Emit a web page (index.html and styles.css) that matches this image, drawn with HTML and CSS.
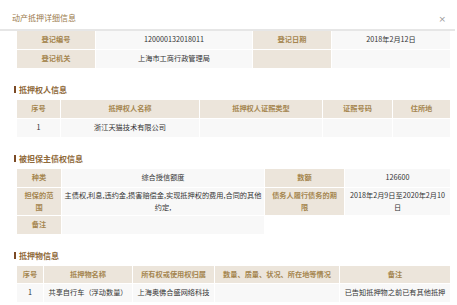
FILE: index.html
```html
<!DOCTYPE html>
<html lang="zh-CN">
<head>
<meta charset="utf-8">
<title>动产抵押详细信息</title>
<link rel="stylesheet" href="styles.css">
</head>
<body>
<div class="dialog">
  <div class="dialog-head">
    <span class="dialog-title">动产抵押详细信息</span>
    <span class="dialog-close">×</span>
  </div>
  <div class="dialog-body">
    <div class="grid t1">
      <div class="c lab">登记编号</div>
      <div class="c val">120000132018011</div>
      <div class="c lab">登记日期</div>
      <div class="c val">2018年2月12日</div>
      <div class="c lab">登记机关</div>
      <div class="c val">上海市工商行政管理局</div>
      <div class="c lab"></div>
      <div class="c val"></div>
    </div>

    <h3 class="sec"><span class="bar"></span>抵押权人信息</h3>
    <div class="grid t2">
      <div class="c lab">序号</div>
      <div class="c lab">抵押权人名称</div>
      <div class="c lab">抵押权人证照类型</div>
      <div class="c lab">证照号码</div>
      <div class="c lab">住所地</div>
      <div class="c val">1</div>
      <div class="c val">浙江天猫技术有限公司</div>
      <div class="c val"></div>
      <div class="c val"></div>
      <div class="c val"></div>
    </div>

    <h3 class="sec"><span class="bar"></span>被担保主债权信息</h3>
    <div class="grid t3">
      <div class="c lab">种类</div>
      <div class="c val">综合授信额度</div>
      <div class="c lab">数额</div>
      <div class="c val">126600</div>
      <div class="c lab tall scope-lab">担保的范围</div>
      <div class="c val tall scope">主债权,利息,违约金,损害赔偿金,实现抵押权的费用,合同的其他约定,</div>
      <div class="c lab tall term-lab">债务人履行债务的期限</div>
      <div class="c val tall term">2018年2月9日至2020年2月10日</div>
      <div class="c lab">备注</div>
      <div class="c val"></div>
    </div>

    <h3 class="sec"><span class="bar"></span>抵押物信息</h3>
    <div class="grid t4">
      <div class="c lab">序号</div>
      <div class="c lab">抵押物名称</div>
      <div class="c lab">所有权或使用权归属</div>
      <div class="c lab">数量、质量、状况、所在地等情况</div>
      <div class="c lab">备注</div>
      <div class="c val">1</div>
      <div class="c val">共享自行车（浮动数量）</div>
      <div class="c val">上海奥佛合盛网络科技</div>
      <div class="c val"></div>
      <div class="c val">已告知抵押物之前已有其他抵押</div>
    </div>
  </div>
</div>
</body>
</html>
```

FILE: styles.css
```css
* { box-sizing: border-box; }
html, body {
  margin: 0;
  padding: 0;
  background: #ffffff;
}
body {
  width: 457px;
  height: 305px;
  overflow: hidden;
  font-family: "Noto Sans CJK SC", "Noto Sans", sans-serif;
  font-size: 7.2px;
  color: #333333;
}
.dialog-head {
  display: flex;
  align-items: center;
  justify-content: space-between;
  height: 29px;
  padding: 5px 12px 0 12px;
}
.dialog-title {
  font-size: 8px;
  color: #9a7a4c;
}
.dialog-close {
  font-family: "DejaVu Sans", sans-serif;
  font-size: 9px;
  color: #9a9a9a;
  margin-top: 3px;
  margin-right: -1px;
}
.dialog-body {
  border-top: 2px solid #e6e6e6;
  margin-right: 2px;
  padding: 0 5px 0 14px;
}
.grid {
  display: grid;
  gap: 1px;
  margin-left: 3px;
  background: #ffffff;
}
.c {
  display: flex;
  align-items: center;
  justify-content: center;
  text-align: center;
  line-height: 11.5px;
  padding: 0 3px;
}
.lab {
  background: #ece5db;
  color: #a5854f;
  font-weight: bold;
}
.val {
  background: #f8f8f8;
  color: #333333;
}
.t1 {
  grid-template-columns: 78px 156px 78px 118px;
  grid-auto-rows: 18px;
}
.t2 {
  grid-template-columns: 43px 138px 122px 69px 57px;
  grid-template-rows: 18px 18px;
}
.t3 {
  grid-template-columns: 44px 202px 79px 105px;
  grid-template-rows: 18px 27px 18px;
}
.t3 .scope { padding: 0 2px; }
.t3 .scope-lab { padding: 0 5px; }
.t3 .term-lab { padding: 0 5px; }
.t3 .term { padding: 0 4px; }
.t4 {
  grid-template-columns: 26px 88px 81px 124px 110px;
  grid-template-rows: 17px 18px;
}
.sec {
  display: flex;
  align-items: center;
  height: 14px;
  margin: 14px 0 4px 0;
  font-size: 8px;
  font-weight: bold;
  color: #8f6a3a;
}
.bar {
  display: inline-block;
  width: 2px;
  height: 7px;
  background: #7b4a25;
  margin-right: 3px;
}
```
